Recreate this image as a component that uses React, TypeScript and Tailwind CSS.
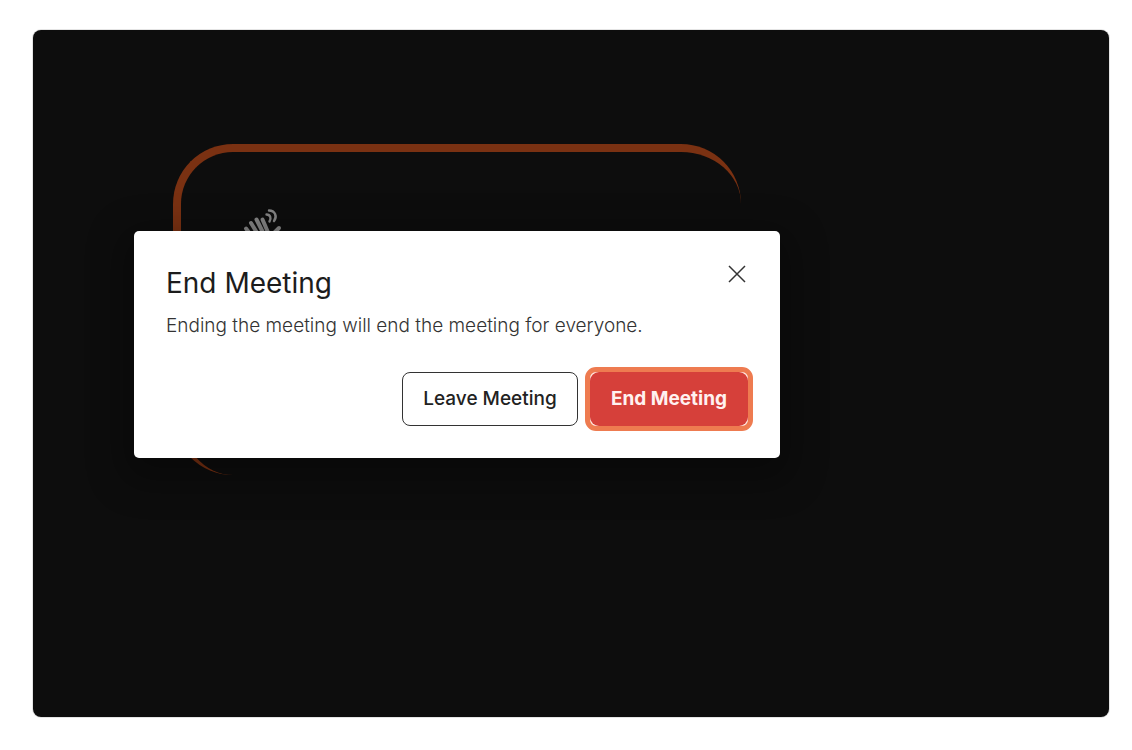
import React from 'react';

const RaisedHand = () => (
  <svg
    viewBox="0 0 44 44"
    className="w-11 h-11 text-[#858585]"
    fill="none"
    stroke="currentColor"
    strokeWidth="4"
    strokeLinecap="round"
    aria-hidden="true"
  >
    <path d="M4 20.500l6 8" />
    <path d="M9 15l8 13" />
    <path d="M14.500 11.500l8 16" />
    <path d="M20.500 11.500l6 14" />
    <path d="M37 20l-8 8" />
    <path d="M9 28l16-1 6 3-5 8H15z" fill="currentColor" strokeLinejoin="round" />
    <path d="M24.500 6.500c4 0 5 4 3 7" strokeWidth="2.4" />
    <path d="M27 2.500c6 0 8.500 6 5 10.500" strokeWidth="2.4" />
  </svg>
);

const CloseIcon = () => (
  <svg viewBox="0 0 18 18" className="w-[18px] h-[18px]" stroke="currentColor" strokeWidth="1.5" aria-hidden="true">
    <path d="M1 1l16 16M17 1L1 17" />
  </svg>
);

const EndMeetingDialog = () => (
  <div
    role="dialog"
    aria-labelledby="end-title"
    aria-describedby="end-text"
    className="absolute left-1/2 top-[87px] -translate-x-1/2 w-[646px] bg-white rounded-[5px] p-8 shadow-[0_12px_36px_12px_rgba(0,0,0,0.3)]"
  >
    <div className="flex items-start justify-between">
      <h2 id="end-title" className="text-[28px] leading-10 font-normal text-[#1c1c1c]">
        End Meeting
      </h2>
      <button type="button" aria-label="Close" className="p-0.5 text-[#333]">
        <CloseIcon />
      </button>
    </div>
    <p id="end-text" className="mt-[9px] text-[19px] leading-7 font-light text-[#333]">
      Ending the meeting will end the meeting for everyone.
    </p>
    <div className="mt-8 flex items-center justify-end gap-3">
      <button
        type="button"
        className="h-[54px] w-[176px] rounded-lg border border-[#333] text-[19px] font-medium text-[#222]"
      >
        Leave Meeting
      </button>
      <div className="-m-[5px] rounded-[11px] border-5 border-[#ee7b50] bg-[#ffe9e2]">
        <button
          type="button"
          className="block h-[54px] w-[158px] rounded-[9px] bg-[#d6403a] text-[19px] font-bold text-[#fff1f0]"
        >
          End Meeting
        </button>
      </div>
    </div>
  </div>
);

export default function App() {
  return (
    <main className="flex min-h-screen bg-white pt-[30px] pr-[23px] pb-[33px] pl-[33px] font-['Inter',sans-serif]">
      <div className="flex-1 rounded-lg bg-[#0d0d0d] pt-[114px] pl-[140px] ring-1 ring-[#e4e4e4]">
        <div className="relative w-full max-w-[568px]">
          <section className="h-[331px] rounded-[60px] border-t-8 border-l-8 border-[#7a3112] pt-14 pl-[61px]">
            <RaisedHand />
          </section>
          <EndMeetingDialog />
        </div>
      </div>
    </main>
  );
}
